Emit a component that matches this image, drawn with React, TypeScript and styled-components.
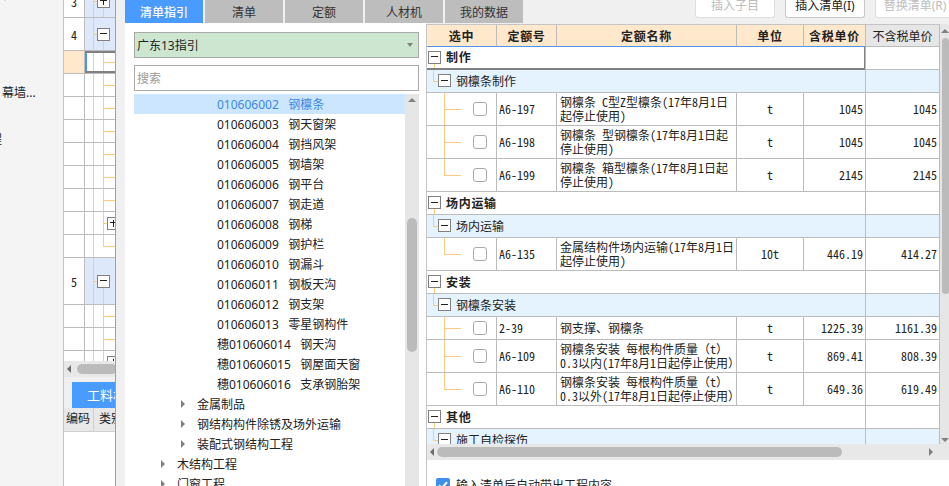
import * as React from 'react';
import styled, { createGlobalStyle, css } from 'styled-components';

const GlobalStyle = createGlobalStyle`
  html, body { margin: 0; padding: 0; background: #fff; }
  body { font-family: "Noto Sans", "Noto Sans CJK SC", sans-serif; font-size: 12px; color: #222; }
  * { box-sizing: border-box; }
`;

const ORANGE = '#ffcb80';
const LINE = '#bcbcbc';

const Page = styled.div`
  display: flex;
  width: 949px;
  height: 486px;
  overflow: hidden;
`;

const Rail = styled.div`
  width: 64px;
  flex: none;
  background: #f4f4f4;
  border-right: 1px solid #c4c4c4;
  overflow: hidden;
  font-size: 12px;
  line-height: 16px;
`;
const RailText = styled.div<{ $top: number; $left: number }>`
  margin: ${(p) => p.$top}px 0 0 ${(p) => p.$left}px;
  white-space: nowrap;
`;

const GridPane = styled.div`
  width: 52px;
  flex: none;
  display: flex;
  flex-direction: column;
  overflow: hidden;
  border-right: 1px solid #a0a0a0;
  background: #f0f0f0;
`;
const GridBody = styled.div`
  height: 361px;
  overflow: hidden;
  background: #fff;
`;
const GridRows = styled.div`
  margin-top: -15px;
`;
const GridRow = styled.div<{ $h: number }>`
  display: flex;
  height: ${(p) => p.$h}px;
  border-bottom: 1px solid ${LINE};
`;
const NumCell = styled.div<{ $active?: boolean }>`
  width: 21px;
  flex: none;
  display: flex;
  align-items: center;
  justify-content: center;
  border-right: 1px solid ${LINE};
  font-family: "Noto Sans CJK SC", sans-serif;
  font-feature-settings: "hwid";
  font-size: 12px;
  background: ${(p) => (p.$active ? '#ffe8cc' : '#fff')};
`;
const TreeCell = styled.div<{ $kind: string; $sel?: boolean }>`
  flex: 1;
  min-width: 0;
  display: flex;
  align-items: center;
  overflow: hidden;
  background-repeat: no-repeat;
  ${(p) =>
    p.$kind === 'group' &&
    css`
      padding-left: 12px;
      background-color: #dde8fb;
      background-image: linear-gradient(${ORANGE}, ${ORANGE}), linear-gradient(${ORANGE}, ${ORANGE}), linear-gradient(${ORANGE}, ${ORANGE});
      background-size: 1px 100%, 4px 1px, 1px 50%;
      background-position: 8px 0, 8px 50%, 18px 100%;
    `}
  ${(p) =>
    p.$kind === 'leaf' &&
    css`
      background-image: linear-gradient(${ORANGE}, ${ORANGE}), linear-gradient(${ORANGE}, ${ORANGE}), linear-gradient(${ORANGE}, ${ORANGE});
      background-size: 1px 100%, 1px 100%, 12px 1px;
      background-position: 8px 0, 18px 0, 18px 50%;
    `}
  ${(p) =>
    p.$kind === 'last' &&
    css`
      background-image: linear-gradient(${ORANGE}, ${ORANGE}), linear-gradient(${ORANGE}, ${ORANGE}), linear-gradient(${ORANGE}, ${ORANGE});
      background-size: 1px 100%, 1px 50%, 12px 1px;
      background-position: 8px 0, 18px 0, 18px 50%;
    `}
  ${(p) =>
    p.$kind === 'branch' &&
    css`
      padding-left: 22px;
      background-image: linear-gradient(${ORANGE}, ${ORANGE}), linear-gradient(${ORANGE}, ${ORANGE}), linear-gradient(${ORANGE}, ${ORANGE});
      background-size: 1px 100%, 1px 100%, 4px 1px;
      background-position: 8px 0, 18px 0, 18px 50%;
    `}
  ${(p) =>
    p.$sel &&
    css`
      box-shadow: inset 0 2px #808080, inset 0 -2px #808080, inset 2px 0 #4a95ef;
    `}
`;
const ExpandBox = styled.span<{ $open?: boolean }>`
  position: relative;
  flex: none;
  display: block;
  width: 13px;
  height: 13px;
  border: 1px solid #808080;
  background: #fff;
  &::before {
    content: '';
    position: absolute;
    left: 2px;
    right: 2px;
    top: 50%;
    height: 1px;
    margin-top: -1px;
    background: #222;
  }
  ${(p) =>
    !p.$open &&
    css`
      &::after {
        content: '';
        position: absolute;
        top: 2px;
        bottom: 2px;
        left: 50%;
        width: 1px;
        margin-left: -1px;
        background: #222;
      }
    `}
`;

const HBar = styled.div`
  height: 16px;
  flex: none;
  display: flex;
  align-items: center;
  background: #e8e8e8;
  padding: 0 3px;
`;
const HBarThumb = styled.div<{ $w: number; $ml: number }>`
  width: ${(p) => p.$w}px;
  height: 10px;
  margin-left: ${(p) => p.$ml}px;
  border-radius: 5px;
  background: #bbbbbb;
  flex: none;
`;
const Arrow = styled.span<{ $dir: 'left' | 'right' | 'up' | 'down' }>`
  display: block;
  flex: none;
  width: 0;
  height: 0;
  ${(p) => p.$dir === 'left' && css`border-top: 4px solid transparent; border-bottom: 4px solid transparent; border-right: 4px solid #6c6c6c;`}
  ${(p) => p.$dir === 'right' && css`border-top: 4px solid transparent; border-bottom: 4px solid transparent; border-left: 4px solid #808080;`}
  ${(p) => p.$dir === 'up' && css`border-left: 4px solid transparent; border-right: 4px solid transparent; border-bottom: 4px solid #808080;`}
  ${(p) => p.$dir === 'down' && css`border-left: 4px solid transparent; border-right: 4px solid transparent; border-top: 4px solid #808080;`}
`;

const BottomTabs = styled.div`
  height: 31px;
  flex: none;
  padding: 5px 0 0 8px;
  background: #f0f0f0;
`;
const BottomTab = styled.div`
  width: 60px;
  height: 26px;
  padding-left: 15px;
  background: #4a9bff;
  color: #fff;
  font-size: 13px;
  line-height: 26px;
  white-space: nowrap;
`;
const BottomHead = styled.div`
  display: flex;
  height: 24px;
  flex: none;
  background: #e8e8e8;
  border-bottom: 1px solid #d0d0d0;
`;
const BottomHeadCell = styled.div<{ $w: number; $pad: number }>`
  width: ${(p) => p.$w}px;
  flex: none;
  padding-left: ${(p) => p.$pad}px;
  line-height: 22px;
  font-size: 12px;
  white-space: nowrap;
  overflow: hidden;
  border-right: 1px solid #cfcfcf;
`;
const BottomFill = styled.div`
  flex: 1;
  background: #fff;
`;

const Dialog = styled.div`
  flex: 1;
  min-width: 0;
  display: flex;
  flex-direction: column;
  background: #f0f0f0;
  padding-left: 9px;
`;
const TopBar = styled.div`
  display: flex;
  height: 24px;
  flex: none;
`;
const Tab = styled.div<{ $active?: boolean }>`
  width: 78px;
  height: 23px;
  margin-right: 2px;
  display: flex;
  align-items: center;
  justify-content: center;
  font-size: 12px;
  background: ${(p) => (p.$active ? '#4a9bff' : '#bdbdbd')};
  color: ${(p) => (p.$active ? '#fff' : '#333')};
  font-weight: ${(p) => (p.$active ? 500 : 400)};
`;
const Actions = styled.div`
  display: flex;
  margin-left: auto;
  gap: 10px;
  margin-right: -6px;
`;
const ActionBtn = styled.div<{ $off?: boolean }>`
  width: 80px;
  height: 18px;
  line-height: 12px;
  text-align: center;
  font-size: 12px;
  white-space: nowrap;
  background: #fff;
  border: 1px solid ${(p) => (p.$off ? '#dedede' : '#c8c8c8')};
  border-top: 0;
  border-radius: 0 0 3px 3px;
  color: ${(p) => (p.$off ? '#bdbdbd' : '#222')};
`;

const Body = styled.div`
  flex: 1;
  min-height: 0;
  display: flex;
`;
const LeftPanel = styled.div`
  width: 301px;
  flex: none;
  display: flex;
  flex-direction: column;
  background: #fff;
  padding: 9px 7px 0 9px;
  margin-top: -1px;
`;
const SelectBox = styled.div`
  height: 26px;
  flex: none;
  display: flex;
  align-items: center;
  justify-content: space-between;
  padding: 0 5px 0 2px;
  background: #cde6d0;
  border: 1px solid #aaa;
`;
const SelectCaret = styled.span`
  display: block;
  width: 0;
  height: 0;
  border-left: 3px solid transparent;
  border-right: 3px solid transparent;
  border-top: 4px solid #808080;
`;
const SearchBox = styled.input`
  height: 26px;
  flex: none;
  width: 100%;
  margin-top: 7px;
  padding: 0 2px;
  border: 1px solid #aaa;
  outline: none;
  font: inherit;
  &::placeholder { color: #999; opacity: 1; }
`;
const TreeWrap = styled.div`
  flex: 1;
  min-height: 0;
  margin-top: 3px;
  display: flex;
`;
const TreeList = styled.div`
  flex: 1;
  min-width: 0;
  overflow: hidden;
`;
const TreeRow = styled.div<{ $active?: boolean; $indent: number }>`
  height: 20px;
  display: flex;
  align-items: center;
  padding-left: ${(p) => p.$indent}px;
  white-space: pre;
  color: ${(p) => (p.$active ? '#3a86e8' : '#222')};
  background: ${(p) => (p.$active ? '#cce6ff' : 'transparent')};
`;
const Caret = styled(Arrow)`
  margin-right: 12px;
`;
const VBar = styled.div`
  width: 14px;
  flex: none;
  display: flex;
  flex-direction: column;
  align-items: center;
  background: #e6e6e6;
  padding-top: 4px;
`;
const VBarThumb = styled.div<{ $top: number; $h: number; $w: number }>`
  width: ${(p) => p.$w}px;
  height: ${(p) => p.$h}px;
  margin-top: ${(p) => p.$top}px;
  border-radius: 5px;
  background: #bbbbbb;
  flex: none;
`;

const RightPanel = styled.div`
  flex: 1;
  min-width: 0;
  display: flex;
  flex-direction: column;
  background: #fff;
  border-left: 1px solid #c4c4c4;
`;
const TableArea = styled.div`
  height: 420px;
  flex: none;
  display: flex;
`;
const TableClip = styled.div`
  width: 513px;
  flex: none;
  overflow: hidden;
  font-family: "Noto Sans CJK SC", sans-serif;
  font-feature-settings: "hwid";
`;
const COLS = '70px 60px 180px 67px 62px 74px';
const HeadRow = styled.div`
  display: grid;
  grid-template-columns: ${COLS};
  height: 23px;
  border-top: 1px solid #c4c4c4;
`;
const HeadCell = styled.div<{ $plain?: boolean }>`
  display: flex;
  align-items: center;
  justify-content: center;
  background: ${(p) => (p.$plain ? '#e6e6e6' : '#ffe8cc')};
  border-right: 1px solid ${LINE};
  border-bottom: 1px solid ${(p) => (p.$plain ? LINE : '#4a95ef')};
  font-weight: ${(p) => (p.$plain ? 400 : 700)};
  letter-spacing: ${(p) => (p.$plain ? 0 : 0.7)}px;
`;
const SectionRow = styled.div<{ $sub?: boolean }>`
  display: grid;
  grid-template-columns: 439px 74px;
  height: 23px;
  background: ${(p) => (p.$sub ? '#e5f3ff' : '#fff')};
`;
const SectionMain = styled.div<{ $sub?: boolean; $sel?: boolean }>`
  display: flex;
  align-items: center;
  gap: 5px;
  line-height: 20px;
  padding-bottom: 1px;
  border-bottom: 1px solid ${LINE};
  padding-left: ${(p) => (p.$sub ? 11 : 1)}px;
  background-repeat: no-repeat;
  background-image: linear-gradient(${ORANGE}, ${ORANGE});
  font-weight: ${(p) => (p.$sub ? 400 : 700)};
  letter-spacing: ${(p) => (p.$sub ? 0 : 0.7)}px;
  ${(p) =>
    p.$sub
      ? css`
          background-size: 5px 1px, 1px 50%;
          background-image: linear-gradient(${ORANGE}, ${ORANGE}), linear-gradient(${ORANGE}, ${ORANGE});
          background-position: 6px 50%, 6px 0;
        `
      : css`
          background-size: 1px 6px;
          background-position: 7px 100%;
        `}
  ${(p) => p.$sel && css`border-bottom: 2px solid #808080; border-right: 2px solid #808080;`}
`;
const SectionRest = styled.div`
  border-bottom: 1px solid ${LINE};
  border-right: 1px solid ${LINE};
  border-left: 1px solid ${LINE};
  margin-left: -1px;
`;
const DataRow = styled.div<{ $h?: number }>`
  display: grid;
  grid-template-columns: ${COLS};
  height: ${(p) => p.$h || 33}px;
`;
const Cell = styled.div<{ $align?: string }>`
  display: flex;
  align-items: center;
  justify-content: ${(p) => p.$align || 'flex-start'};
  padding: 0 2px 2px;
  border-right: 1px solid ${LINE};
  border-bottom: 1px solid ${LINE};
  white-space: nowrap;
`;
const NameCell = styled(Cell)`
  display: block;
  align-self: stretch;
  padding: 2px 0 0 3px;
  line-height: 14px;
  white-space: pre;
`;
const OneLineName = styled(Cell)`
  padding-left: 3px;
`;
const FullWidth = styled.span`
  font-feature-settings: normal;
`;
const CheckCell = styled(Cell)<{ $last?: boolean }>`
  padding: 0 0 0 46px;
  background-repeat: no-repeat;
  background-image: linear-gradient(${ORANGE}, ${ORANGE}), linear-gradient(${ORANGE}, ${ORANGE});
  background-size: 1px ${(p) => (p.$last ? '50%' : '100%')}, 17px 1px;
  background-position: 17px 0, 17px 50%;
`;
const CheckBox = styled.span`
  display: block;
  flex: none;
  width: 14px;
  height: 14px;
  background: #fff;
  border: 1px solid #aaa;
  border-radius: 3px;
`;
const SideBar = styled.div`
  width: 9px;
  flex: none;
  display: flex;
  flex-direction: column;
  align-items: center;
  background: #e6e6e6;
  padding: 5px 0 2px;
`;
const SideThumb = styled(VBarThumb)`
  align-self: flex-end;
`;
const SideDown = styled(Arrow)`
  margin-top: auto;
`;
const TableHBar = styled(HBar)`
  width: 513px;
  justify-content: flex-start;
  padding: 0 0 0 3px;
`;
const BarWrap = styled.div`
  display: flex;
  flex: none;
`;
const BarCorner = styled.div`
  width: 9px;
  background: #e8e8e8;
`;
const RightArrow = styled(Arrow)`
  margin-left: 87px;
`;
const Options = styled.div`
  display: flex;
  align-items: center;
  gap: 6px;
  padding: 16px 0 0 9px;
  white-space: nowrap;
`;
const BlueCheck = styled.svg`
  width: 14px;
  height: 14px;
  flex: none;
  display: block;
`;

const leftRows: { h: number; n?: string; kind: string; box?: 'open' | 'closed'; active?: boolean; sel?: boolean }[] = [
  { h: 33, n: '3', kind: 'group', box: 'closed' },
  { h: 33, n: '4', kind: 'group', box: 'open' },
  { h: 23, kind: 'leaf', active: true, sel: true },
  { h: 23, kind: 'leaf' },
  { h: 23, kind: 'leaf' },
  { h: 23, kind: 'leaf' },
  { h: 23, kind: 'leaf' },
  { h: 23, kind: 'leaf' },
  { h: 23, kind: 'leaf' },
  { h: 23, kind: 'branch', box: 'closed' },
  { h: 23, kind: 'last' },
  { h: 47, n: '5', kind: 'group', box: 'open' },
  { h: 23, kind: 'leaf' },
  { h: 23, kind: 'leaf' },
  { h: 23, kind: 'branch', box: 'closed' },
];

const treeItems: { text: string; indent: number; caret?: boolean; active?: boolean }[] = [
  { text: '010606002   钢檩条', indent: 83, active: true },
  { text: '010606003   钢天窗架', indent: 83 },
  { text: '010606004   钢挡风架', indent: 83 },
  { text: '010606005   钢墙架', indent: 83 },
  { text: '010606006   钢平台', indent: 83 },
  { text: '010606007   钢走道', indent: 83 },
  { text: '010606008   钢梯', indent: 83 },
  { text: '010606009   钢护栏', indent: 83 },
  { text: '010606010   钢漏斗', indent: 83 },
  { text: '010606011   钢板天沟', indent: 83 },
  { text: '010606012   钢支架', indent: 83 },
  { text: '010606013   零星钢构件', indent: 83 },
  { text: '穗010606014   钢天沟', indent: 83 },
  { text: '穗010606015   钢屋面天窗', indent: 83 },
  { text: '穗010606016   支承钢胎架', indent: 83 },
  { text: '金属制品', indent: 47, caret: true },
  { text: '钢结构构件除锈及场外运输', indent: 47, caret: true },
  { text: '装配式钢结构工程', indent: 47, caret: true },
  { text: '木结构工程', indent: 27, caret: true },
  { text: '门窗工程', indent: 27, caret: true },
];

type Quota = { code: string; name: React.ReactNode; unit: string; tax: string; noTax: string; h?: number; last?: boolean };
type Section = { title: string; sub: string; rows: Quota[] };

const sections: Section[] = [
  {
    title: '制作',
    sub: '钢檩条制作',
    rows: [
      { code: 'A6-197', name: '钢檩条 C型Z型檩条(17年8月1日\n起停止使用)', unit: 't', tax: '1045', noTax: '1045' },
      { code: 'A6-198', name: '钢檩条 型钢檩条(17年8月1日起\n停止使用)', unit: 't', tax: '1045', noTax: '1045' },
      { code: 'A6-199', name: '钢檩条 箱型檩条(17年8月1日起\n停止使用)', unit: 't', tax: '2145', noTax: '2145', last: true },
    ],
  },
  {
    title: '场内运输',
    sub: '场内运输',
    rows: [
      { code: 'A6-135', name: '金属结构件场内运输(17年8月1日\n起停止使用)', unit: '10t', tax: '446.19', noTax: '414.27', last: true },
    ],
  },
  {
    title: '安装',
    sub: '钢檩条安装',
    rows: [
      { code: '2-39', name: '钢支撑、钢檩条', unit: 't', tax: '1225.39', noTax: '1161.39', h: 23 },
      {
        code: 'A6-109',
        name: <>钢檩条安装 每根构件质量<FullWidth>（</FullWidth>t<FullWidth>）</FullWidth>{'\n'}0.3以内(17年8月1日起停止使用<FullWidth>）</FullWidth></>,
        unit: 't',
        tax: '869.41',
        noTax: '808.39',
      },
      {
        code: 'A6-110',
        name: <>钢檩条安装 每根构件质量<FullWidth>（</FullWidth>t<FullWidth>）</FullWidth>{'\n'}0.3以外(17年8月1日起停止使用<FullWidth>）</FullWidth></>,
        unit: 't',
        tax: '649.36',
        noTax: '619.49',
        last: true,
      },
    ],
  },
];

const App: React.FC = (): React.ReactElement => {
  return (
    <Page>
      <GlobalStyle />
      <Rail>
        <RailText $top={-13} $left={2}>柱</RailText>
        <RailText $top={82} $left={2}>幕墙...</RailText>
        <RailText $top={31} $left={-22}>工程</RailText>
      </Rail>

      <GridPane>
        <GridBody>
          <GridRows>
            {leftRows.map((row, i) => (
              <GridRow $h={row.h} key={`row_${i}`}>
                <NumCell $active={row.active}>{row.n}</NumCell>
                <TreeCell $kind={row.kind} $sel={row.sel}>
                  {row.box && <ExpandBox $open={row.box === 'open'} />}
                </TreeCell>
              </GridRow>
            ))}
          </GridRows>
        </GridBody>
        <HBar>
          <Arrow $dir="left" />
          <HBarThumb $w={40} $ml={6} />
        </HBar>
        <BottomTabs>
          <BottomTab>工料机</BottomTab>
        </BottomTabs>
        <BottomHead>
          <BottomHeadCell $w={30} $pad={2}>编码</BottomHeadCell>
          <BottomHeadCell $w={22} $pad={5}>类别</BottomHeadCell>
        </BottomHead>
        <BottomFill />
      </GridPane>

      <Dialog>
        <TopBar>
          <Tab $active>清单指引</Tab>
          <Tab>清单</Tab>
          <Tab>定额</Tab>
          <Tab>人材机</Tab>
          <Tab>我的数据</Tab>
          <Actions>
            <ActionBtn $off>插入子目</ActionBtn>
            <ActionBtn>插入清单(I)</ActionBtn>
            <ActionBtn $off>替换清单(R)</ActionBtn>
          </Actions>
        </TopBar>
        <Body>
          <LeftPanel>
            <SelectBox>
              <span>广东13指引</span>
              <SelectCaret />
            </SelectBox>
            <SearchBox placeholder="搜索" readOnly />
            <TreeWrap>
              <TreeList>
                {treeItems.map((item) => (
                  <TreeRow key={item.text} $indent={item.indent} $active={item.active}>
                    {item.caret && <Caret $dir="right" />}
                    {item.text}
                  </TreeRow>
                ))}
              </TreeList>
              <VBar>
                <Arrow $dir="up" />
                <VBarThumb $w={10} $h={134} $top={116} />
              </VBar>
            </TreeWrap>
          </LeftPanel>

          <RightPanel>
            <TableArea>
              <TableClip>
                <HeadRow>
                  <HeadCell>选中</HeadCell>
                  <HeadCell>定额号</HeadCell>
                  <HeadCell>定额名称</HeadCell>
                  <HeadCell>单位</HeadCell>
                  <HeadCell>含税单价</HeadCell>
                  <HeadCell $plain>不含税单价</HeadCell>
                </HeadRow>
                {sections.map((section, si) => (
                  <React.Fragment key={section.title}>
                    <SectionRow>
                      <SectionMain $sel={si === 0}>
                        <ExpandBox $open />
                        {section.title}
                      </SectionMain>
                      <SectionRest />
                    </SectionRow>
                    <SectionRow $sub>
                      <SectionMain $sub>
                        <ExpandBox $open />
                        {section.sub}
                      </SectionMain>
                      <SectionRest />
                    </SectionRow>
                    {section.rows.map((row) => (
                      <DataRow key={row.code} $h={row.h}>
                        <CheckCell $last={row.last}>
                          <CheckBox />
                        </CheckCell>
                        <Cell>{row.code}</Cell>
                        {row.h ? <OneLineName>{row.name}</OneLineName> : <NameCell>{row.name}</NameCell>}
                        <Cell $align="center">{row.unit}</Cell>
                        <Cell $align="flex-end">{row.tax}</Cell>
                        <Cell $align="flex-end">{row.noTax}</Cell>
                      </DataRow>
                    ))}
                  </React.Fragment>
                ))}
                <SectionRow>
                  <SectionMain>
                    <ExpandBox $open />
                    其他
                  </SectionMain>
                  <SectionRest />
                </SectionRow>
                <SectionRow $sub>
                  <SectionMain $sub>
                    <ExpandBox $open />
                    施工自检探伤
                  </SectionMain>
                  <SectionRest />
                </SectionRow>
              </TableClip>
              <SideBar>
                <Arrow $dir="up" />
                <SideThumb $w={7} $h={256} $top={5} />
                <SideDown $dir="down" />
              </SideBar>
            </TableArea>
            <BarWrap>
              <TableHBar>
                <Arrow $dir="left" />
                <HBarThumb $w={405} $ml={3} />
                <RightArrow $dir="right" />
              </TableHBar>
              <BarCorner />
            </BarWrap>
            <Options>
              <BlueCheck viewBox="0 0 14 14">
                <rect width="14" height="14" rx="2" fill="#3f8fee" />
                <path d="M3 7.2l2.8 2.8L11 4.2" fill="none" stroke="#fff" strokeWidth="2" />
              </BlueCheck>
              输入清单后自动带出工程内容
            </Options>
          </RightPanel>
        </Body>
      </Dialog>
    </Page>
  );
};

export default App;
